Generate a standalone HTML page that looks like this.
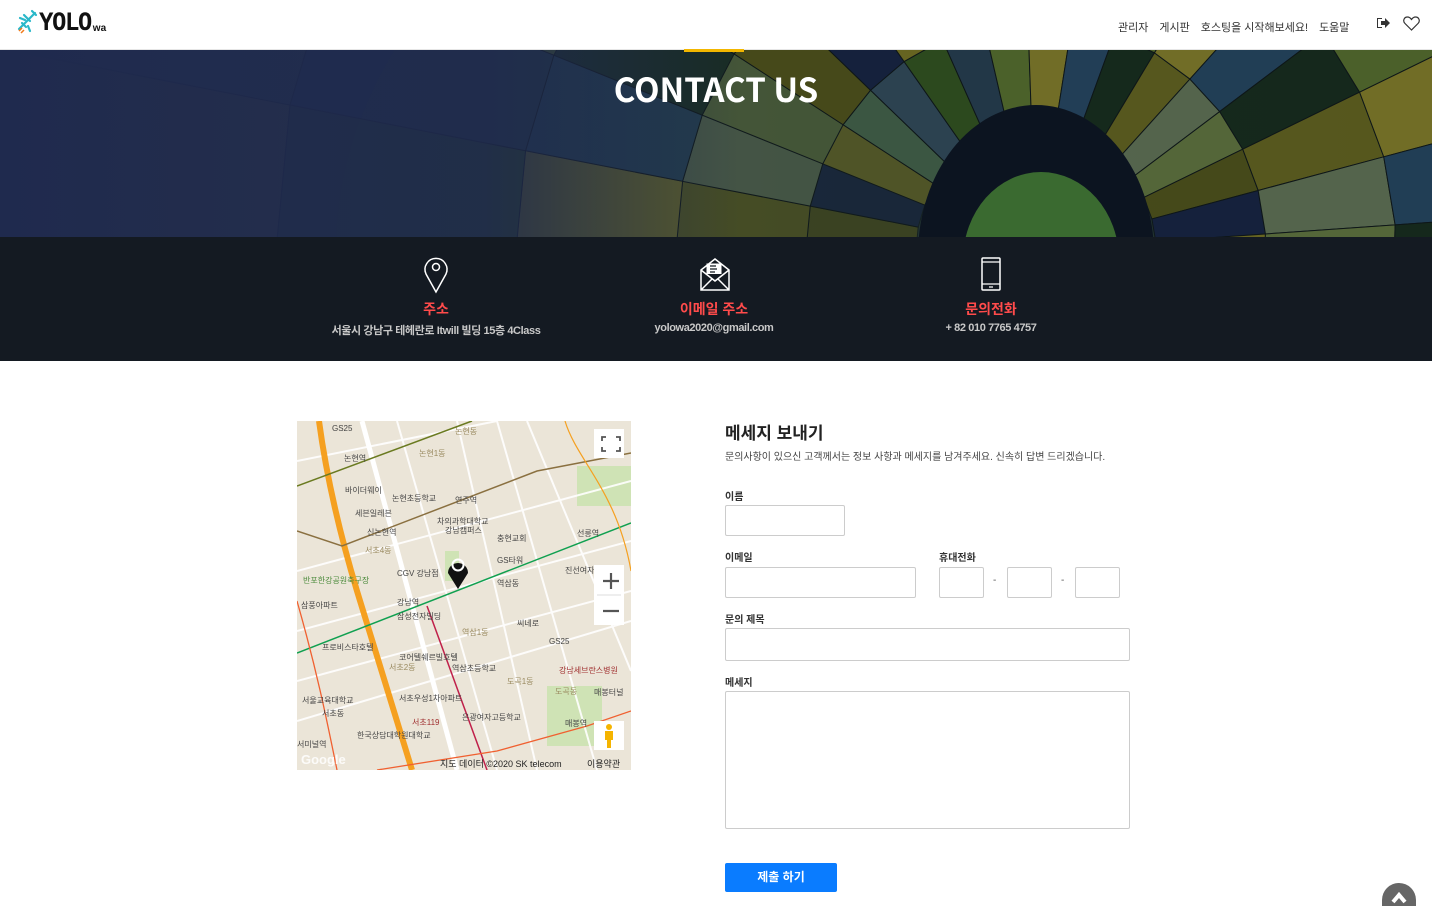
<!DOCTYPE html>
<html><head><meta charset="utf-8">
<style>
*{margin:0;padding:0;box-sizing:border-box}
html,body{width:1432px;height:906px;overflow:hidden}
body{background:#fff;font-family:"Liberation Sans","Noto Sans CJK KR",sans-serif;position:relative}
.nav{position:absolute;top:0;left:0;width:1432px;height:50px;background:#fff;border-bottom:1px solid #e6e6e6}
.logo{position:absolute;left:16px;top:9px;display:flex;align-items:flex-end}
.logo b{font-family:"DejaVu Sans Mono",monospace;font-size:24px;font-weight:bold;letter-spacing:-1.5px;color:#111;margin-left:1px;line-height:26px}
.logo small{font-size:10px;font-weight:bold;color:#111;margin-left:2px;margin-bottom:1px}
.menu{position:absolute;top:19px;left:1118px;font-size:11px;color:#333;white-space:nowrap}
.menu span{margin-right:11px}
.hero{position:absolute;top:50px;left:0;width:1432px;height:187px;overflow:hidden;
background:linear-gradient(90deg,#1f2a4e 0%,#1e2848 40%,#18223a 55%,#152030 100%)}
.hero h1{position:absolute;top:14px;width:100%;text-align:center;color:#fff;font-family:"Noto Sans CJK KR","Liberation Sans",sans-serif;font-size:33px;font-weight:bold;letter-spacing:0}
.yl{position:absolute;top:49px;left:684px;width:60px;height:3px;background:#f2b600}
.info{position:absolute;top:237px;left:0;width:1432px;height:124px;background:#141a22}
.it{position:absolute;top:0;text-align:center;width:300px}
.it .t{position:absolute;top:62px;width:100%;color:#ff4b4b;font-size:14px;font-weight:bold}
.it .d{position:absolute;top:85px;width:100%;color:#c8c8c8;font-size:11px;font-weight:bold;letter-spacing:-0.4px}
.it svg{position:absolute;top:19px;left:135px}
.map{position:absolute;left:297px;top:421px;width:334px;height:349px;overflow:hidden;background:#ebe5d8}
h2{position:absolute;left:725px;top:419px;font-size:17px;color:#222;font-weight:bold}
.sub{position:absolute;left:725px;top:448px;font-size:10px;color:#444}
.lb{position:absolute;font-size:10px;color:#333;font-weight:bold}
.in{position:absolute;border:1px solid #ccc;border-radius:2px;background:#fff}
.btn{position:absolute;left:725px;top:863px;width:112px;height:29px;background:#0a7cff;border-radius:2px;color:#fff;font-size:12px;font-weight:bold;text-align:center;line-height:29px}
.top{position:absolute;left:1382px;top:883px;width:34px;height:23px;border-radius:17px 17px 0 0;background:#666;overflow:hidden}
.dash{position:absolute;top:575px;font-size:10px;color:#555}
</style></head><body>
<div class="nav">
 <div class="logo">
  <svg width="22" height="26" viewBox="0 0 22 26"><g stroke="#2bb8c9" stroke-width="2.2" fill="none" stroke-linecap="round"><path d="M3 20 L19 4"/><path d="M8 6 L14 12 M6 14 L10 18 M16 2 L20 6"/><path d="M4 9 L9 11 M12 17 L14 22"/></g><path d="M3 22 L6 19 M5 24 L8 21" stroke="#f07a1a" stroke-width="1.5"/></svg>
  <b>YOLO</b><small>wa</small>
 </div>
 <div class="menu"><span>관리자</span><span>게시판</span><span>호스팅을 시작해보세요!</span><span>도움말</span></div>
 <svg style="position:absolute;left:1376px;top:17px" width="14" height="12" viewBox="0 0 14 12"><path d="M1 1h5v1H2v8h4v1H1z" fill="#333"/><path d="M5 4h4V1l5 5-5 5V8H5z" fill="#333"/></svg>
 <svg style="position:absolute;left:1403px;top:16px" width="17" height="15" viewBox="0 0 17 15"><path d="M8.5 14 L2 7.5 C-0.5 5 1 1 4.5 1 C6.5 1 7.8 2.5 8.5 3.5 C9.2 2.5 10.5 1 12.5 1 C16 1 17.5 5 15 7.5 Z" fill="none" stroke="#333" stroke-width="1.2"/></svg>
</div>
<div class="hero">
 <svg id="bal" width="1432" height="187" style="position:absolute;left:0;top:0">
  <ellipse cx="1036" cy="200" rx="700" ry="500" fill="#2a4030" opacity=".6"/>
 </svg>
 <h1>CONTACT US</h1>
</div>
<script>
(function(){
var s=document.getElementById('bal'),ns='http://www.w3.org/2000/svg';
var cx=1036,cy=200;
var pal=['#22405a','#4a4c18','#2e4c1c','#14281a','#14203e','#22384a','#5c5c1c','#6e6a20','#50662a','#5a6a50','#3e5a44','#7a7426','#5a6c3a','#2e4454'];
var radii=[120,230,360,520,760,1100];
function pt(r,a){return [cx+r*Math.cos(a),cy+r*Math.sin(a)];}
var step=11;
for(var a=-235,i=0;a<30;a+=step,i++){
 for(var k=0;k<radii.length-1;k++){
  var a1=a*Math.PI/180,a2=(a+step)*Math.PI/180,r1=radii[k],r2=radii[k+1];
  var p1=pt(r1,a1),p2=pt(r2,a1),p3=pt(r2,a2),p4=pt(r1,a2);
  var p=document.createElementNS(ns,'path');
  p.setAttribute('d','M'+p1+' L'+p2+' L'+p3+' L'+p4+'Z');
  p.setAttribute('fill',pal[(i*3+k*5)%pal.length]);
  p.setAttribute('stroke','#0e1618');p.setAttribute('stroke-width','1');
  p.setAttribute('opacity',a<-150?'0.6':'0.9');
  s.appendChild(p);
 }
}
var e=document.createElementNS(ns,'ellipse');
e.setAttribute('cx',cx);e.setAttribute('cy',cy+5);e.setAttribute('rx',118);e.setAttribute('ry',150);e.setAttribute('fill','#0c1420');s.appendChild(e);
var e2=document.createElementNS(ns,'ellipse');
e2.setAttribute('cx',cx+5);e2.setAttribute('cy',cy+10);e2.setAttribute('rx',78);e2.setAttribute('ry',88);e2.setAttribute('fill','#3a6a30');s.appendChild(e2);
var g=document.createElementNS(ns,'rect');
g.setAttribute('x',0);g.setAttribute('y',0);g.setAttribute('width',740);g.setAttribute('height',187);
g.setAttribute('fill','url(#fade)');
var d=document.createElementNS(ns,'defs');
d.innerHTML='<linearGradient id="fade" x1="0" x2="1"><stop offset="0" stop-color="#1f2a4e" stop-opacity="1"/><stop offset="0.65" stop-color="#1f2a4e" stop-opacity="0.85"/><stop offset="1" stop-color="#1f2a4e" stop-opacity="0"/></linearGradient>';
s.appendChild(d);s.appendChild(g);
})();
</script>
<div class="yl"></div>
<div class="info">
 <div class="it" style="left:286px">
  <svg width="30" height="38" viewBox="0 0 30 38"><path d="M15 36 L5 18 A11 11 0 1 1 25 18 Z" fill="none" stroke="#fff" stroke-width="1.5"/><circle cx="15" cy="11" r="3.5" fill="none" stroke="#fff" stroke-width="1.5"/></svg>
  <div class="t">주소</div><div class="d">서울시 강남구 테헤란로 Itwill 빌딩 15층 4Class</div>
 </div>
 <div class="it" style="left:564px">
  <svg width="32" height="36" viewBox="0 0 32 36"><path d="M2 14 L16 3 L30 14 V34 H2Z M2 14 L16 25 L30 14 M2 34 L13 23 M30 34 L19 23" fill="none" stroke="#fff" stroke-width="1.5"/><path d="M8 18 V8 H22 V18" fill="#fff" stroke="#fff"/><path d="M11 10h6M11 13h7M11 16h5" stroke="#141a22" stroke-width="1.2"/></svg>
  <div class="t">이메일 주소</div><div class="d">yolowa2020@gmail.com</div>
 </div>
 <div class="it" style="left:841px">
  <svg width="30" height="36" viewBox="0 0 30 36"><rect x="6" y="2" width="18" height="32" rx="1" fill="none" stroke="#fff" stroke-width="1.5"/><path d="M6 6h18M6 28h18M13 31h4" stroke="#fff" stroke-width="1.3"/></svg>
  <div class="t">문의전화</div><div class="d">+ 82 010 7765 4757</div>
 </div>
</div>
<div class="map">
 <svg width="334" height="349" viewBox="0 0 334 349" style="font-family:'Liberation Sans','Noto Sans CJK KR',sans-serif">
  <rect x="280" y="45" width="54" height="40" fill="#cfe3b5"/>
  <rect x="250" y="265" width="55" height="60" fill="#cfe3b5"/>
  <rect x="148" y="130" width="14" height="30" fill="#cfe3b5"/>
  <g stroke="#fff" stroke-width="2" fill="none" opacity=".9">
   <path d="M0 150 L334 60"/><path d="M0 210 L334 120"/><path d="M0 300 L334 200"/><path d="M160 0 L240 349"/><path d="M200 0 L300 349"/><path d="M230 0 L334 250"/><path d="M0 40 L200 0"/><path d="M0 260 L334 170"/><path d="M100 0 L200 349"/>
  </g>
  <path d="M65 0 L160 349" stroke="#fff" stroke-width="5"/>
  <path d="M22 0 C30 60 45 120 60 170 L115 349" stroke="#f5a020" stroke-width="6" fill="none"/>
  <path d="M0 65 L175 0" stroke="#6a7a20" stroke-width="1.5"/>
  <path d="M0 110 L45 125 L240 50 L334 32" stroke="#8a7040" stroke-width="1.5" fill="none"/>
  <path d="M0 232 L334 102" stroke="#10a050" stroke-width="1.5"/>
  <path d="M130 185 L190 349" stroke="#c0204a" stroke-width="1.5"/>
  <path d="M268 0 C280 40 320 70 334 150" stroke="#f5a020" stroke-width="1.2" fill="none"/>
  <path d="M80 349 L200 330 L290 305 L334 290" stroke="#f06030" stroke-width="1.3" fill="none"/>
  <path d="M0 180 C20 250 30 300 40 349" stroke="#f06030" stroke-width="1.3" fill="none"/>
  <g font-size="8" fill="#444">
   <text x="35" y="10">GS25</text><text x="47" y="40">논현역</text><text x="48" y="72">바이더웨이</text><text x="95" y="80">논현초등학교</text><text x="58" y="95">세븐일레븐</text><text x="158" y="82">연주역</text><text x="140" y="103">차의과학대학교</text><text x="148" y="112">강남캠퍼스</text><text x="70" y="114">신논현역</text><text x="200" y="120">충현교회</text><text x="280" y="115">선릉역</text><text x="200" y="142">GS타워</text><text x="100" y="155">CGV 강남점</text><text x="268" y="152">진선여자</text><text x="6" y="162" fill="#4a8a3a">반포한강공원축구장</text><text x="200" y="165">역삼동</text><text x="4" y="187">삼풍아파트</text><text x="100" y="184">강남역</text><text x="100" y="198">삼성전자빌딩</text><text x="220" y="205">씨네로</text><text x="252" y="223">GS25</text><text x="25" y="229">프로비스타호텔</text><text x="102" y="239">코어텔쉐르빌호텔</text><text x="155" y="250">역삼초등학교</text><text x="262" y="252" fill="#a03030">강남세브란스병원</text><text x="297" y="274">매봉터널</text><text x="5" y="282">서울교육대학교</text><text x="102" y="280">서초우성1차아파트</text><text x="25" y="295">서초동</text><text x="165" y="299">은광여자고등학교</text><text x="115" y="304" fill="#a03030">서초119</text><text x="60" y="317">한국상담대학원대학교</text><text x="268" y="305">매봉역</text><text x="0" y="326">서미널역</text>
  </g>
  <g font-size="8" fill="#9a8a60"><text x="158" y="13">논현동</text><text x="122" y="35">논현1동</text><text x="68" y="132">서초4동</text><text x="165" y="214">역삼1동</text><text x="92" y="249">서초2동</text><text x="210" y="263">도곡1동</text><text x="258" y="273">도곡동</text></g>
  <text x="143" y="346" font-size="9" fill="#222">지도 데이터 ©2020 SK telecom</text>
  <text x="290" y="346" font-size="9" fill="#222">이용약관</text>
  <text x="4" y="343" font-size="13" fill="#fff" opacity=".85" font-weight="bold">Google</text>
  <path d="M161 168 L151 152 A10 10 0 1 1 171 152 Z" fill="#111"/><circle cx="161" cy="144" r="5.5" fill="none" stroke="#fff" stroke-width="2"/>
  <rect x="297" y="8" width="30" height="29" fill="#fff"/><path d="M305 20v-4h4M319 16h4v4M323 26v4h-4M309 30h-4v-4" stroke="#555" stroke-width="1.8" fill="none"/>
  <rect x="297" y="144" width="30" height="60" fill="#fff"/><path d="M306 160h16M314 152v16M306 190h16" stroke="#555" stroke-width="2.2"/><path d="M300 174h24" stroke="#ddd"/>
  <rect x="297" y="300" width="30" height="29" fill="#fff"/><circle cx="312" cy="306" r="3" fill="#f5b400"/><path d="M308 310h8v9h-2v8h-4v-8h-2z" fill="#f5b400"/>
 </svg>
</div>
<h2>메세지 보내기</h2>
<div class="sub">문의사항이 있으신 고객께서는 정보 사항과 메세지를 남겨주세요. 신속히 답변 드리겠습니다.</div>
<div class="lb" style="left:725px;top:488px">이름</div>
<div class="in" style="left:725px;top:505px;width:120px;height:31px"></div>
<div class="lb" style="left:725px;top:549px">이메일</div>
<div class="in" style="left:725px;top:567px;width:191px;height:31px"></div>
<div class="lb" style="left:939px;top:549px">휴대전화</div>
<div class="in" style="left:939px;top:567px;width:45px;height:31px"></div>
<div class="dash" style="left:993px">-</div>
<div class="in" style="left:1007px;top:567px;width:45px;height:31px"></div>
<div class="dash" style="left:1061px">-</div>
<div class="in" style="left:1075px;top:567px;width:45px;height:31px"></div>
<div class="lb" style="left:725px;top:611px">문의 제목</div>
<div class="in" style="left:725px;top:628px;width:405px;height:33px"></div>
<div class="lb" style="left:725px;top:674px">메세지</div>
<div class="in" style="left:725px;top:691px;width:405px;height:138px"></div>
<div class="btn">제출 하기</div>
<div class="top"><svg width="34" height="23" viewBox="0 0 34 23"><path d="M11 19 L17 12 L23 19" stroke="#fff" stroke-width="4" fill="none"/></svg></div>
</body></html>
